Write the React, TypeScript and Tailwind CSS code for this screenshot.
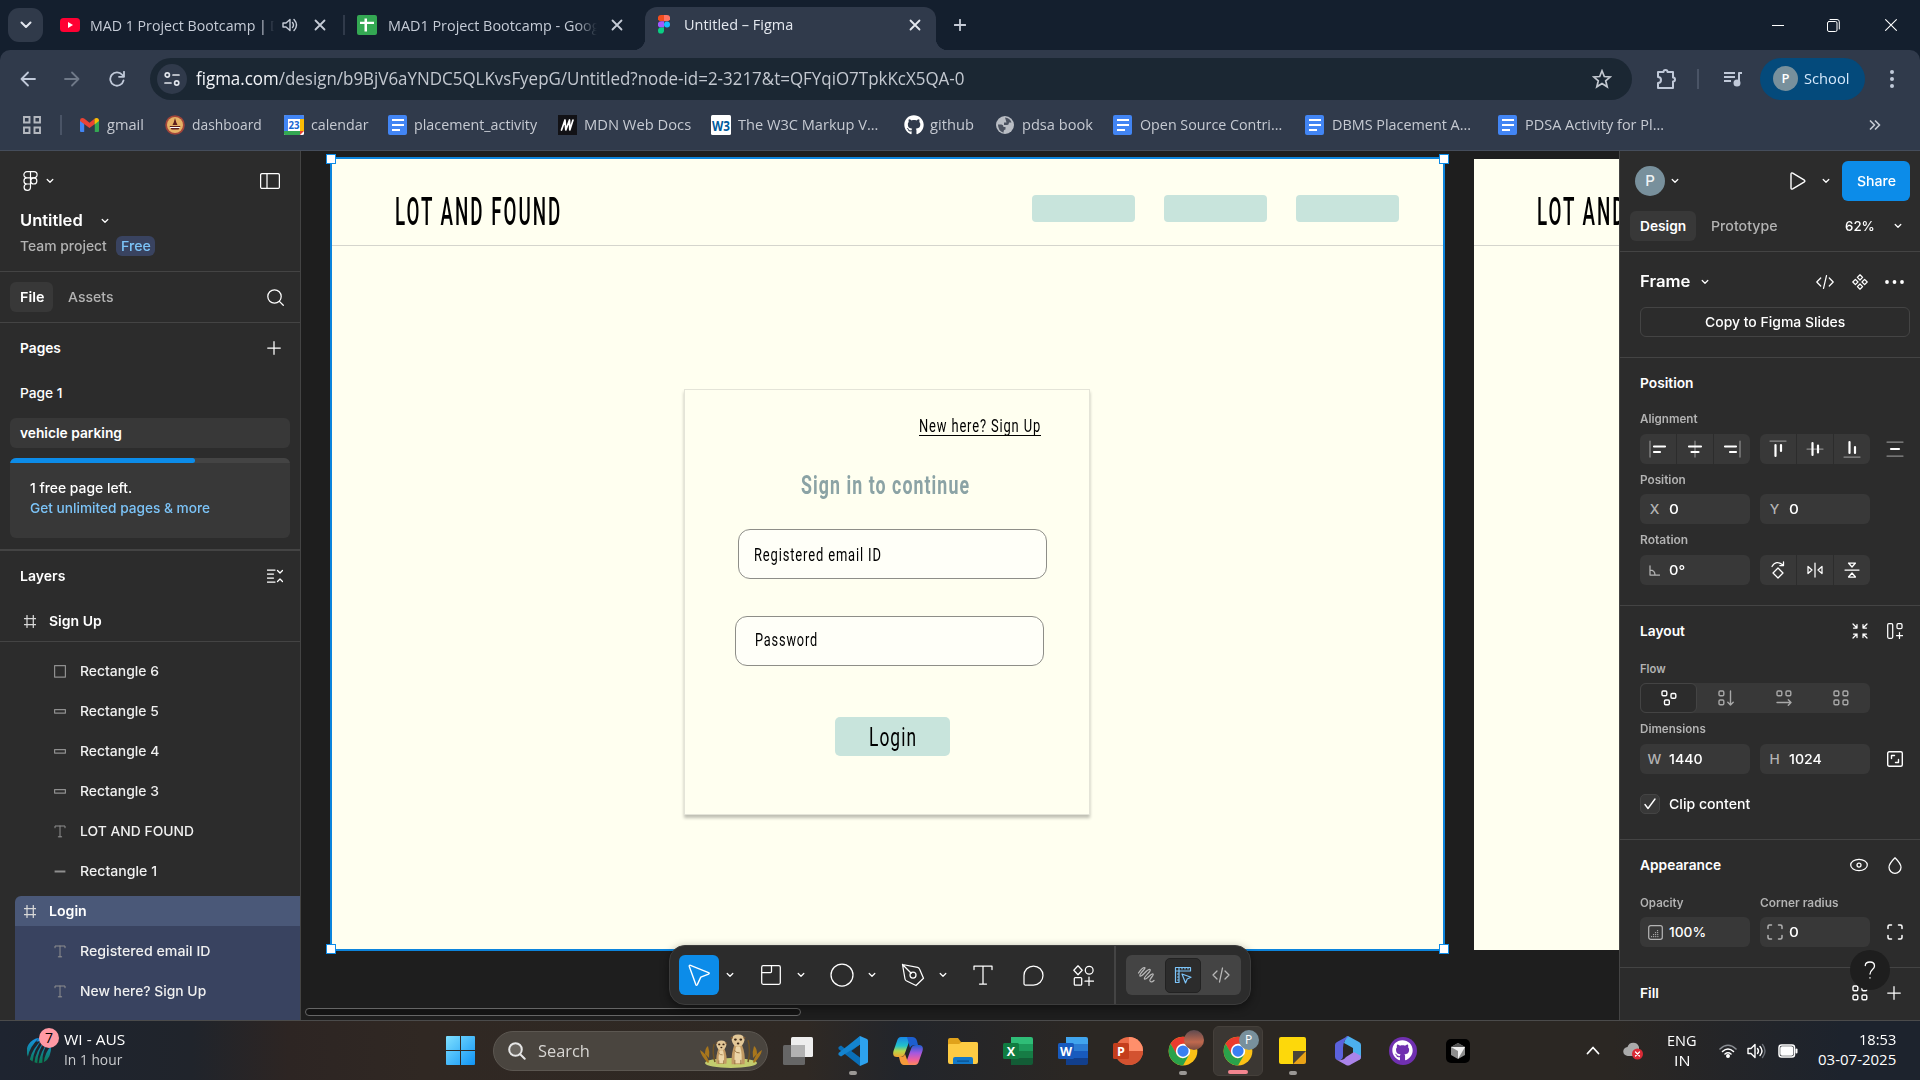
import React, { useLayoutEffect, useRef, useState } from "react";
import { FaGithub } from "react-icons/fa";

type Kids = { children?: React.ReactNode };

/* Text that is condensed or stretched horizontally to fill a fixed measure. */
function Fit({ w, className = "", children }: { w: number; className?: string } & Kids) {
  const ref = useRef<HTMLSpanElement>(null);
  const [scale, setScale] = useState(1);
  useLayoutEffect(() => {
    if (ref.current && ref.current.offsetWidth) setScale(w / ref.current.offsetWidth);
  }, [w]);
  return (
    <span className={"block shrink-0 " + className} style={{ width: w }}>
      <span
        ref={ref}
        className="inline-block origin-left whitespace-nowrap align-top"
        style={{ transform: `scaleX(${scale})` }}
      >
        {children}
      </span>
    </span>
  );
}

function Svg({
  w,
  h = w,
  vb,
  className = "",
  sw = 1.25,
  children,
}: { w: number; h?: number; vb?: string; className?: string; sw?: number } & Kids) {
  return (
    <svg
      width={w}
      height={h}
      viewBox={vb ?? `0 0 ${w} ${h}`}
      fill="none"
      stroke="currentColor"
      strokeWidth={sw}
      strokeLinecap="round"
      strokeLinejoin="round"
      className={"block shrink-0 " + className}
    >
      {children}
    </svg>
  );
}

const Chevron = ({ className = "" }: { className?: string }) => (
  <Svg w={8} h={6} className={className}>
    <path d="M1.2 1.5 4 4.3 6.8 1.5" />
  </Svg>
);

const Close = ({ className = "" }: { className?: string }) => (
  <Svg w={12} sw={1.8} className={className}>
    <path d="m1.5 1.5 9 9m0-9-9 9" />
  </Svg>
);

const Plus = ({ className = "" }: { className?: string }) => (
  <Svg w={14} className={className}>
    <path d="M7 .7v12.6M.7 7h12.6" />
  </Svg>
);

const DocIcon = ({ className = "" }: { className?: string }) => (
  <Svg w={19} h={20} className={className} sw={0}>
    <rect width="19" height="20" rx="2" fill="#4285f4" />
    <path d="M4 4h12v2H4zM4 9h12v2H4zM4 14h8v2H4z" fill="#fff" />
  </Svg>
);

/* ---------- Browser ---------- */

function TabStrip() {
  return (
    <div className="flex h-[50px] items-center bg-[#141f2e] pl-2 text-[15px] text-[#c5cbd6]">
      <div className="flex h-[34px] w-[35px] items-center justify-center rounded-[11px] bg-[#303a4a] text-[#e2e6ee]">
        <Svg w={12} h={8} sw={2}>
          <path d="m1.5 1.5 4.5 4.5 4.5-4.5" />
        </Svg>
      </div>
      <Svg w={20} h={14} sw={0} className="ml-[17px]">
        <rect width="20" height="14" rx="3.5" fill="#ff0033" />
        <path d="M8 4v6l5-3z" fill="#fff" />
      </Svg>
      <div className="ml-[10px] flex w-[184px] shrink-0 overflow-hidden whitespace-nowrap [mask-image:linear-gradient(to_right,#000_94%,transparent)]">
        <Fit w={177}>MAD 1 Project Bootcamp |</Fit>
        <span className="ml-[3px]">D</span>
      </div>
      <Svg w={16} h={14} sw={1.4} className="ml-2">
        <path d="M1 5v4h3l4 3.5v-11L4 5zM10.500 4.500q2 2.500 0 5M12 1.500q5 5.500 0 11" />
      </Svg>
      <Close className="ml-4" />
      <div className="ml-[17px] h-5 w-[2px] bg-[#303a4a]" />
      <Svg w={20} sw={0} className="ml-3">
        <rect width="20" height="20" rx="2" fill="#34a853" />
        <path d="M7.500 3.500h2.500v13H7.500zM3 6.700h14v2.300H3z" fill="#fff" />
      </Svg>
      <div className="ml-[11px] w-[209px] shrink-0 overflow-hidden whitespace-nowrap [mask-image:linear-gradient(to_right,#000_90%,transparent)]">
        <Fit w={212}>MAD1 Project Bootcamp - Goog</Fit>
      </div>
      <Close className="ml-[14px]" />
      <div className="relative ml-[22px] flex h-[43px] w-[291px] shrink-0 items-center self-end rounded-t-xl bg-[#303a4b] pl-[14px] pb-[8px] text-[#e4e8ef]">
        <div className="absolute bottom-0 -left-3 size-3 bg-[radial-gradient(circle_at_0_0,transparent_12px,#303a4b_12.5px)]" />
        <div className="absolute bottom-0 -right-3 size-3 bg-[radial-gradient(circle_at_100%_0,transparent_12px,#303a4b_12.5px)]" />
        <Svg w={12} h={19} sw={0} className="-ml-px">
          <path d="M3 0h3v6.300H3A3 3 0 0 1 3 0z" fill="#f24e1e" />
          <path d="M6 0h3a3.100 3.100 0 0 1 0 6.300H6z" fill="#ff7262" />
          <path d="M3 6.300h3v6.300H3a3.100 3.100 0 0 1 0-6.300z" fill="#a259ff" />
          <circle cx="9" cy="9.500" r="3" fill="#1abcfe" />
          <path d="M3 12.600h3v3.200a3 3 0 1 1-3-3.200z" fill="#0acf83" />
        </Svg>
        <Fit w={109} className="ml-[14px]">Untitled – Figma</Fit>
        <Close className="ml-[116px]" />
      </div>
      <Svg w={12} sw={1.8} className="ml-[18px]">
        <path d="M6 .7v10.600M.7 6h10.600" />
      </Svg>
      <div className="ml-auto mr-[23px] flex items-center text-white">
        <div className="h-px w-3 bg-white" />
        <Svg w={13} h={13} sw={1} className="ml-[43px]">
          <rect x=".5" y="2.500" width="9.500" height="10" rx="1.500" />
          <path d="M3 .5h7a2.300 2.300 0 0 1 2.300 2.300V10" />
        </Svg>
        <Svg w={12} sw={1.1} className="ml-[45px]">
          <path d="m.6.600 10.800 10.800m0-10.800L.6 11.400" />
        </Svg>
      </div>
    </div>
  );
}

function AddressRow() {
  return (
    <div className="flex h-[57px] items-center pl-5 text-[#c0c9d9]">
      <Svg w={16} sw={1.8}>
        <path d="M15 8H1.500M8 1.500 1.500 8 8 14.500" />
      </Svg>
      <Svg w={16} sw={1.8} className="ml-7 text-[#6f7988]">
        <path d="M1 8h13.500M8 1.500 14.500 8 8 14.500" />
      </Svg>
      <Svg w={16} sw={1.8} className="ml-[29px]">
        <path d="M14.500 9.500a6.700 6.700 0 1 1-1.300-5.700L15 5.500M15 .8v5h-5" />
      </Svg>
      <div className="ml-[25px] flex h-[42px] w-[1482px] shrink-0 items-center rounded-full bg-[#1b2733] pl-[7px] text-[17.5px] text-[#c3c8d0]">
        <div className="flex size-[30px] items-center justify-center rounded-full bg-[#303a4b] text-[#e1e5ec]">
          <Svg w={16} h={14} sw={1.7}>
            <circle cx="3.300" cy="3" r="2.100" />
            <path d="M9 3h6M1 11h6" />
            <circle cx="12.700" cy="11" r="2.100" />
          </Svg>
        </div>
        <Fit w={768} className="ml-[9px]">
          <span className="text-[#f2f4f8]">figma.com</span>/design/b9BjV6aYNDC5QLKvsFyepG/Untitled?node-id=2-3217&amp;t=QFYqiO7TpkKcX5QA-0
        </Fit>
        <Svg w={20} sw={1.7} className="ml-[628px]">
          <path d="m10 1.800 2.300 5.700 6 .4-4.600 3.900 1.500 6L10 14.500l-5.200 3.300 1.500-6-4.600-3.900 6-.4z" strokeLinejoin="miter" />
        </Svg>
      </div>
      <Svg w={21} h={22} sw={2} className="ml-6">
        <path d="M2 4h5.500a2 2 0 1 1 4 0H17v5.500a2 2 0 1 1 0 4V20H2v-5a2.800 2.800 0 0 0 0-6z" />
      </Svg>
      <div className="ml-5 h-5 w-[2px] bg-[#4a5466]" />
      <Svg w={20} h={16} sw={2} className="ml-6">
        <path d="M1 2h11M1 6h11M1 10h7M16 12V2h3" strokeLinecap="butt" />
        <circle cx="14" cy="12" r="2.500" fill="currentColor" />
      </Svg>
      <div className="ml-[17px] flex h-[42px] w-[105px] items-center rounded-full bg-[#044a7b] pl-[13px] text-[#d4e8fb]">
        <div className="flex size-[25px] items-center justify-center rounded-full bg-[#78909c] text-[13px] font-semibold text-white">P</div>
        <Fit w={45} className="ml-[6px] text-[15px]">School</Fit>
      </div>
      <Svg w={4} h={18} sw={0} className="ml-[25px]">
        <g fill="currentColor">
          <circle cx="2" cy="2" r="2" />
          <circle cx="2" cy="9" r="2" />
          <circle cx="2" cy="16" r="2" />
        </g>
      </Svg>
    </div>
  );
}

function Bookmarks() {
  return (
    <div className="flex h-[35px] items-center pl-[23px] text-[15px] text-[#c6cad2]">
      <Svg w={18} sw={1.9} className="text-[#b4b8bf]">
        <path d="M1 1h5.500v5.500H1zM11.500 1H17v5.500h-5.500zM1 11.500h5.500V17H1zM11.500 11.500H17V17h-5.500z" strokeLinejoin="miter" />
      </Svg>
      <div className="ml-[19px] h-5 w-[2px] bg-[#4a5466]" />
      <Svg w={19} h={14} sw={0} className="ml-[18px]">
        <path d="M0 2.500V13q0 1 1 1h3.200V5.500z" fill="#4285f4" />
        <path d="M19 2.500V13q0 1-1 1h-3.200V5.500z" fill="#34a853" />
        <path d="M0 3Q-.2 0 2.500 0q1 0 2 .8l5 3.900 5-3.900v5.400l-5 3.900L0 3z" fill="#ea4335" />
        <path d="M14.500.8Q15.500 0 16.500 0 19 0 19 3l-4.500 3.400z" fill="#fbbc04" />
      </Svg>
      <Fit w={37} className="ml-2">gmail</Fit>
      <Svg w={20} sw={0} className="ml-[21px]">
        <circle cx="10" cy="10" r="9.800" fill="#a3453a" />
        <circle cx="10" cy="10" r="8" fill="#e6b266" />
        <path d="M4.500 11h11l-2 3.500h-7zM10 3l1.300 4.500L12.500 10h-5l1.200-2.500z" fill="#5d1f1f" />
        <path d="M5.500 12.500h9" stroke="#fff" strokeWidth="1" />
      </Svg>
      <Fit w={70} className="ml-[7px]">dashboard</Fit>
      <Svg w={20} sw={0} className="ml-[22px]">
        <rect width="20" height="20" rx="1.500" fill="#fff" />
        <path d="M0 1.500Q0 0 1.500 0h17Q20 0 20 1.500V4H4v12H0z" fill="#4285f4" />
        <path d="M16 4h4v12h-4z" fill="#fbbc04" />
        <path d="M0 16h16v4H1.500Q0 20 0 18.500z" fill="#34a853" />
        <path d="M16 16h4l-4 4z" fill="#ea4335" />
        <text x="10" y="14" fontSize="11" fontWeight="700" textAnchor="middle" fill="#1967d2" fontFamily="Open Sans" textLength="11" lengthAdjust="spacingAndGlyphs">23</text>
      </Svg>
      <Fit w={58} className="ml-[7px]">calendar</Fit>
      <DocIcon className="ml-[19px]" />
      <Fit w={123} className="ml-[7px]">placement_activity</Fit>
      <Svg w={19} h={20} sw={1.7} className="ml-[21px] text-white">
        <path d="M0 0h19v20H0z" fill="#121216" stroke="none" />
        <path d="M3.500 15 7 5l.8 10L11.500 5l.3 10L15 5" />
      </Svg>
      <Fit w={107} className="ml-[7px]">MDN Web Docs</Fit>
      <Svg w={20} sw={0} className="ml-5">
        <rect width="20" height="20" rx="1.500" fill="#fff" />
        <text x="1" y="15.500" fontSize="14" fontWeight="700" fill="#005a9c" fontFamily="Open Sans" textLength="18" lengthAdjust="spacingAndGlyphs">W3</text>
      </Svg>
      <Fit w={140} className="ml-[7px]">The W3C Markup V...</Fit>
      <FaGithub className="ml-[26px] block size-5 shrink-0 text-white" />
      <Fit w={44} className="ml-[6px]">github</Fit>
      <Svg w={18} sw={0} className="ml-[22px]">
        <circle cx="9" cy="9" r="9" fill="#b9bdc4" />
        <path d="M2 8.500h3.500q2 .3 2 2.500h2v2.500q-2 0-2 3.300Q2 15 2 8.500zM9 1.500q5 .5 6.500 5h-2.500q0 2.500-2 2.500H8V6.500h2.500z" fill="#4b5260" />
      </Svg>
      <Fit w={71} className="ml-2">pdsa book</Fit>
      <DocIcon className="ml-5" />
      <Fit w={142} className="ml-2">Open Source Contri...</Fit>
      <DocIcon className="ml-[23px]" />
      <Fit w={139} className="ml-2">DBMS Placement A...</Fit>
      <DocIcon className="ml-[27px]" />
      <Fit w={139} className="ml-2">PDSA Activity for Pl...</Fit>
      <Svg w={12} h={10} sw={1.7} className="ml-auto mr-[39px]">
        <path d="m1.500 1 4 4-4 4m5-8 4 4-4 4" />
      </Svg>
    </div>
  );
}

/* ---------- Left panel ---------- */

const HashIcon = () => (
  <Svg w={12} h={13} className="text-[#d8d8d8]">
    <path d="M3 .5v12M9.300.5v12M.3 3.500h11.700M.3 9.500h11.700" />
  </Svg>
);

type Kind = "square" | "bar" | "line" | "text";
function LayerIcon({ kind }: { kind: Kind }) {
  return (
    <Svg w={12} h={13} sw={1.2}>
      {kind === "square" && <rect x=".6" y=".6" width="10.800" height="11.500" />}
      {kind === "bar" && <rect x=".6" y="4.600" width="10.800" height="3.500" />}
      {kind === "line" && <path d="M.6 6.500h10.800" strokeWidth="2" strokeLinecap="butt" />}
      {kind === "text" && <path d="M1 2.800V1h10v1.800M6 1v10.800M4.300 11.800h3.400" strokeWidth="1" />}
    </Svg>
  );
}

function Layer({ kind, label, w }: { kind: Kind; label: string; w: number }) {
  return (
    <div className="flex h-10 items-center pl-[54px]">
      <div className="text-[#8f8f8f]">
        <LayerIcon kind={kind} />
      </div>
      <Fit w={w} className="ml-[14px] text-[#f0f0f0]">{label}</Fit>
    </div>
  );
}

function LeftPanel() {
  return (
    <div className="h-full w-[301px] shrink-0 overflow-hidden border-r border-[#444] bg-[#2c2c2c] text-[13.75px] font-[480] leading-5 text-white">
      <div className="h-[121px] border-b border-[#444] pt-[14px]">
        <div className="flex h-8 items-center pl-[23px] pr-5">
          <Svg w={15} h={20} sw={1.2}>
            <path d="M7.500.7H4a3.050 3.050 0 0 0 0 6.200h3.500zM7.500.7H11a3.050 3.050 0 0 1 0 6.200H7.500zM7.500 6.900H4A3.050 3.050 0 0 0 4 13h3.500zM7.500 13v3.200A3.200 3.200 0 1 1 4 13" />
            <circle cx="10.800" cy="9.950" r="3.050" />
          </Svg>
          <Chevron className="ml-2" />
          <Svg w={20} h={16} className="ml-auto">
            <rect x=".6" y=".6" width="18.800" height="14.800" rx="1.500" />
            <path d="M7 1v14" />
          </Svg>
        </div>
        <div className="mt-[11px] flex h-6 items-center pl-[20px]">
          <Fit w={63} className="text-[16px] font-semibold">Untitled</Fit>
          <Chevron className="ml-[18px] mt-[2px]" />
        </div>
        <div className="mt-1 flex h-5 items-center pl-[20px]">
          <Fit w={87} className="text-[#b3b3b3]">Team project</Fit>
          <div className="ml-[9px] flex h-5 w-[39px] items-center justify-center rounded-[6px] bg-[#394360] text-[#7cc4f8]">
            <Fit w={30}>Free</Fit>
          </div>
        </div>
      </div>
      <div className="flex h-[51px] items-center border-b border-[#444] pl-[10px] pr-4">
        <div className="flex h-[30px] w-[43px] items-center rounded-[6px] bg-[#383838] pl-[10px] font-semibold">
          <Fit w={24}>File</Fit>
        </div>
        <Fit w={46} className="ml-[15px] text-[#b3b3b3]">Assets</Fit>
        <Svg w={17} className="ml-auto">
          <circle cx="7.500" cy="7.500" r="6.700" />
          <path d="m12.400 12.400 3.900 3.900" />
        </Svg>
      </div>
      <div className="flex h-[50px] items-center pl-5 pr-[19px]">
        <Fit w={41} className="font-semibold">Pages</Fit>
        <Plus className="ml-auto" />
      </div>
      <div className="mt-[5px] flex h-[30px] items-center pl-5">
        <Fit w={43}>Page 1</Fit>
      </div>
      <div className="mx-[10px] mt-[10px] flex h-[30px] items-center rounded-[6px] bg-[#383838] pl-[10px]">
        <Fit w={102} className="font-semibold">vehicle parking</Fit>
      </div>
      <div className="mx-[10px] mt-[10px] h-20 overflow-hidden rounded-[6px] bg-[#383838]">
        <div className="h-[5px] bg-[#444]">
          <div className="h-full w-[185px] rounded-r-sm bg-[#0c8ce9]" />
        </div>
        <div className="pl-5 pt-[15px]">
          <Fit w={102}>1 free page left.</Fit>
          <Fit w={180} className="text-[#7cc4f8]">Get unlimited pages &amp; more</Fit>
        </div>
      </div>
      <div className="mt-[11px] h-[2px] bg-[#444]" />
      <div className="flex h-[50px] items-center pl-5 pr-[17px]">
        <Fit w={45} className="font-semibold">Layers</Fit>
        <Svg w={16} h={14} className="ml-auto">
          <path d="M.5 1h7.500M.5 5h6M.5 9h6M.5 13h7.500M10.500 1.500 13 4l2.500-2.500M10.500 12.500 13 10l2.500 2.500" />
        </Svg>
      </div>
      <div className="mt-[5px] flex h-[36px] items-center border-b border-[#444] pb-[5px] pl-6 font-semibold">
        <HashIcon />
        <Fit w={53} className="ml-[13px]">Sign Up</Fit>
      </div>
      <div className="mt-[9px]">
        <Layer kind="square" label="Rectangle 6" w={79} />
        <Layer kind="bar" label="Rectangle 5" w={79} />
        <Layer kind="bar" label="Rectangle 4" w={79} />
        <Layer kind="bar" label="Rectangle 3" w={79} />
        <Layer kind="text" label="LOT AND FOUND" w={114} />
        <Layer kind="line" label="Rectangle 1" w={77} />
      </div>
      <div className="ml-[15px] mt-[5px] flex h-[30px] items-center rounded-tl-[6px] bg-[#4a5878] pl-[9px] font-semibold">
        <HashIcon />
        <Fit w={38} className="ml-[13px]">Login</Fit>
      </div>
      <div className="ml-[15px] h-[94px] bg-[#394360] pt-[5px]">
        <div className="-ml-[15px]">
          <Layer kind="text" label="Registered email ID" w={130} />
          <Layer kind="text" label="New here? Sign Up" w={126} />
        </div>
      </div>
    </div>
  );
}

/* ---------- Canvas ---------- */

const Handle = ({ className }: { className: string }) => (
  <div className={"absolute size-[10px] border-[1.500px] border-[#0c8ce9] bg-white " + className} />
);

function Heading() {
  return (
    <div className="flex h-[87px] items-center border-b-[1.500px] border-[#d5d5cd] pl-[63px] pt-[19px]">
      <Fit w={167} className="text-[38px] font-medium leading-[40px] tracking-[4px] text-black">LOT AND FOUND</Fit>
    </div>
  );
}

function Canvas() {
  return (
    <div className="relative h-full min-w-0 flex-1 overflow-hidden bg-[#1e1e1e] font-['Roboto',sans-serif]">
      <div className="absolute left-[29px] top-[6px] h-[794px] w-[1115px] border-2 border-[#0c84dc] bg-[#fffff0]">
        <Heading />
        <div className="absolute left-[700px] top-[36px] flex gap-[29px]">
          <div className="h-[27px] w-[103px] rounded-[4px] bg-[#c8e4dc]" />
          <div className="h-[27px] w-[103px] rounded-[4px] bg-[#c8e4dc]" />
          <div className="h-[27px] w-[103px] rounded-[4px] bg-[#c8e4dc]" />
        </div>
        <div className="absolute left-[352px] top-[230px] h-[426px] w-[406px] border border-[#e4e4d8] bg-[#fffff0] text-black shadow-[0_3px_3px_rgba(0,0,0,0.25)]">
          <div className="flex h-[72px] items-center pl-[234px]">
            <Fit w={122} className="border-b border-black text-[18px] leading-[19px] tracking-[1.2px]">New here? Sign Up</Fit>
          </div>
          <Fit w={169} className="ml-[116px] mt-[8px] text-[25px] font-bold leading-[32px] tracking-[1.5px] text-[#8ba3a5]">Sign in to continue</Fit>
          <div className="ml-[53px] mt-[27px] flex h-[50px] w-[309px] items-center rounded-[12px] border border-[#8e8e88] bg-[#fffff8] pl-[15px]">
            <Fit w={128} className="text-[18px] tracking-[1.2px]">Registered email ID</Fit>
          </div>
          <div className="ml-[50px] mt-[37px] flex h-[50px] w-[309px] items-center rounded-[12px] border border-[#8e8e88] bg-[#fffff8] pl-[19px] pb-[3px]">
            <Fit w={63} className="text-[18px] tracking-[1.2px]">Password</Fit>
          </div>
          <div className="ml-[150px] mt-[51px] flex h-[39px] w-[115px] items-center justify-center rounded-[5px] bg-[#c8e4dc] pt-[3px]">
            <Fit w={48} className="text-[25px] leading-8 tracking-[1.5px]">Login</Fit>
          </div>
        </div>
        <Handle className="-left-[6px] -top-[5px]" />
        <Handle className="-right-[6px] -top-[5px]" />
        <Handle className="-bottom-[5px] -left-[6px]" />
        <Handle className="-bottom-[5px] -right-[6px]" />
      </div>
      <div className="absolute left-[1173px] top-[8px] h-[791px] w-[400px] bg-[#fffff0]">
        <Heading />
      </div>
      <div className="absolute bottom-[4px] left-[4px] h-[8px] w-[496px] rounded-full border border-[#666] bg-[#141414]" />
      <BottomBar />
    </div>
  );
}

function BottomBar() {
  return (
    <div className="absolute left-[368px] top-[794px] flex h-[60px] w-[582px] items-center rounded-[16px] border border-[#3c3c3c] bg-[#2c2c2c] pl-[9px] text-white shadow-[0_3px_10px_rgba(0,0,0,0.45)]">
      <div className="flex size-10 items-center justify-center rounded-[6px] bg-[#0c8ce9]">
        <Svg w={22} sw={1.4}>
          <path d="M1.300 2.500Q.9 1 2.500 1.400l18 7.200q1.500.7 0 1.500l-7.700 3-3.500 7.500q-.8 1.300-1.500 0z" />
        </Svg>
      </div>
      <Chevron className="ml-[7px]" />
      <Svg w={20} className="ml-[27px]">
        <rect x=".7" y=".7" width="18.600" height="18.600" rx="1.500" />
        <path d="M10.500 1v5.500q0 1-1 1H1" />
      </Svg>
      <Chevron className="ml-4" />
      <Svg w={24} className="ml-[25px]">
        <circle cx="12" cy="12" r="11" />
      </Svg>
      <Chevron className="ml-[14px]" />
      <Svg w={24} className="ml-[25px]">
        <path d="M1.500 1.500 4 16q.3 1.500 1.700 2l9.300 4.500 7.500-7.300L18.500 6q-.5-1.300-2-1.600zM1.500 1.500l8.700 8.800" />
        <circle cx="12" cy="12" r="3" />
      </Svg>
      <Chevron className="ml-[14px]" />
      <Svg w={20} h={20} className="ml-[26px]">
        <path d="M1 4.500V1h18v3.500M10 1v18M6.500 19h7" />
      </Svg>
      <Svg w={21} h={21} className="ml-[30px]">
        <path d="M10.500 1a9.500 9.500 0 1 1 0 19H2.200q-1.200 0-1.200-1.200V10.500A9.500 9.500 0 0 1 10.500 1z" />
      </Svg>
      <Svg w={21} h={21} className="ml-[29px]">
        <path d="m5 .8 4.200 4.500L5 9.800.8 5.300zM16 12v8.500M12 16.200h8.500" />
        <circle cx="16.200" cy="5.300" r="3.900" />
        <rect x="1.300" y="12.500" width="7.400" height="7.700" rx="1" />
      </Svg>
      <div className="ml-5 h-full w-[2px] bg-[#444]" />
      <div className="ml-[10px] flex h-10 w-[115px] items-center rounded-[6px] bg-[#444] text-[#b8b8b8]">
        <Svg w={18} className="ml-[11px]">
          <path d="M1.500 7Q5 1.500 7.500 1.500c2.500.5-6 6.500-4.500 8.500 2 1.500 7.500-8 10-6.500 2 1.500-7 7.500-5.500 9.500C9.500 14.500 14 6.500 16 8c1.500 1.500-4 4.500-3 7 1 1.500 2.500 1 4-.5" />
        </Svg>
        <div className="ml-[10px] flex h-[35px] w-[36px] items-center justify-center rounded-[5px] border border-[#222] bg-[#2c2c2c] text-[#7cc4f8]">
          <Svg w={18} sw={1.2}>
            <path d="M16.500 5V1.500h-15v15H5V5zM1.500 5H5V1.500M8 1.500V3M11 1.500V3M14 1.500V3M3.500 8H5M3.500 11H5M3.500 14H5M8 8l9 3.300-3.800 1.700L11.500 17z" />
          </Svg>
        </div>
        <Svg w={18} h={16} className="ml-[11px]">
          <path d="M5 4 1 8l4 4M13 4l4 4-4 4M10.500 1l-3 14" />
        </Svg>
      </div>
    </div>
  );
}

/* ---------- Right panel ---------- */

const Label = ({ children, w, className = "" }: { w: number; className?: string } & Kids) => (
  <Fit w={w} className={"text-[11.250px] font-[560] leading-5 text-[#b3b3b3] " + className}>{children}</Fit>
);

const Cells = ({ icons }: { icons: React.ReactNode[] }) => (
  <div className="grid h-[30px] w-[110px] shrink-0 grid-cols-3 gap-px overflow-hidden rounded-[6px]">
    {icons.map((icon, i) => (
      <div key={i} className="flex items-center justify-center bg-[#383838]">{icon}</div>
    ))}
  </div>
);

const Field = ({ lead, value, w }: { lead: React.ReactNode; value: string; w: number }) => (
  <div className="flex h-[30px] w-[110px] shrink-0 items-center rounded-[6px] bg-[#383838]">
    <div className="flex w-[29px] justify-center text-[#b3b3b3]">{lead}</div>
    <Fit w={w}>{value}</Fit>
  </div>
);

const AlignIcon = ({ dim, lit }: { dim: string; lit: string }) => (
  <Svg w={18} sw={0}>
    <path d={dim} stroke="#8c8c8c" strokeWidth="1.250" />
    <path d={lit} stroke="#fff" strokeWidth="2.200" />
  </Svg>
);

const Corners = () => (
  <Svg w={16} sw={1.5}>
    <path d="M1 4.500V2.500Q1 1 2.500 1h2M11.500 1h2Q15 1 15 2.500v2M15 11.500v2q0 1.500-1.500 1.500h-2M4.500 15h-2Q1 15 1 13.500v-2" />
  </Svg>
);

const FourSquares = () => (
  <Svg w={16} sw={1.4}>
    <rect x="1" y="1" width="4.800" height="4.800" rx="1.200" />
    <rect x="10" y="1" width="4.800" height="4.800" rx="1.200" />
    <rect x="1" y="10" width="4.800" height="4.800" rx="1.200" />
    <rect x="10" y="10" width="4.800" height="4.800" rx="1.200" />
  </Svg>
);

function RightPanel() {
  return (
    <div className="relative h-full w-[301px] shrink-0 overflow-hidden border-l border-[#444] bg-[#2c2c2c] text-[13.750px] font-[480] leading-5 text-white">
      <div className="h-[101px] border-b border-[#444]">
        <div className="flex h-[60px] items-center pl-[15px] pr-[10px]">
          <div className="flex size-[30px] items-center justify-center rounded-full bg-[#78909c] text-[15px] text-[#eef2f4]">P</div>
          <Chevron className="ml-[6px]" />
          <Svg w={16} h={18} className="ml-[111px]" sw={1.4}>
            <path d="M1 2.300Q1 .3 2.700 1.200l11.700 7q1 .8 0 1.600l-11.700 7Q1 17.700 1 15.700z" />
          </Svg>
          <Chevron className="ml-4" />
          <div className="ml-auto flex h-10 w-[68px] items-center justify-center rounded-[6px] bg-[#0c8ce9]">
            <Fit w={39}>Share</Fit>
          </div>
        </div>
        <div className="flex h-[30px] items-center pl-[10px] pr-[18px]">
          <div className="flex h-[30px] w-[66px] items-center rounded-[6px] bg-[#383838] pl-[10px] font-semibold">
            <Fit w={46}>Design</Fit>
          </div>
          <Fit w={66} className="ml-[15px] text-[#b3b3b3]">Prototype</Fit>
          <Fit w={30} className="ml-auto">62%</Fit>
          <Chevron className="ml-[19px]" />
        </div>
      </div>
      <div className="h-[106px] border-b border-[#444] pt-[13px]">
        <div className="flex h-8 items-center pl-[20px] pr-4">
          <Fit w={50} className="text-[16px] font-semibold">Frame</Fit>
          <Chevron className="ml-[11px] mt-[2px]" />
          <Svg w={18} h={14} className="ml-auto mt-[2px]">
            <path d="M4.700 3 .8 7l3.900 4M13.300 3l3.900 4-3.900 4M10.500.6l-3 12.800" />
          </Svg>
          <Svg w={16} className="ml-[18px] mt-[2px]">
            <path d="m8 .8 2.600 2.600L8 6 5.400 3.400zM8 10l2.600 2.600L8 15.200l-2.600-2.600zM3.400 5.400 6 8l-2.600 2.600L.8 8zM12.600 5.400 15.200 8l-2.600 2.600L10 8z" />
          </Svg>
          <Svg w={19} h={4} sw={0} className="ml-[17px] mt-px">
            <g fill="currentColor">
              <circle cx="2" cy="2" r="1.900" />
              <circle cx="9.500" cy="2" r="1.900" />
              <circle cx="17" cy="2" r="1.900" />
            </g>
          </Svg>
        </div>
        <div className="ml-5 mt-[10px] flex h-[30px] w-[270px] items-center justify-center rounded-[6px] border border-[#444]">
          <Fit w={140}>Copy to Figma Slides</Fit>
        </div>
      </div>
      <div className="h-[248px] border-b border-[#444] pl-5 pt-[15px]">
        <Fit w={54} className="font-semibold">Position</Fit>
        <Label w={58} className="mt-4">Alignment</Label>
        <div className="mt-[5px] flex items-center gap-[10px]">
          <Cells
            icons={[
              <AlignIcon key="l" dim="M1 1v16" lit="M5 6.500h11M5 12h6" />,
              <AlignIcon key="c" dim="M9 1v16" lit="M3 6.500h12M5.500 12h7" />,
              <AlignIcon key="r" dim="M17 1v16" lit="M2 6.500h11M7 12h6" />,
            ]}
          />
          <Cells
            icons={[
              <AlignIcon key="t" dim="M1 1h16" lit="M6.500 5v11M12 5v6" />,
              <AlignIcon key="m" dim="M1 9h16" lit="M6.500 3v12M12 5.500v7" />,
              <AlignIcon key="b" dim="M1 17h16" lit="M6.500 2v11M12 7v6" />,
            ]}
          />
          <div className="ml-[6px]">
            <AlignIcon dim="M1 2h16M1 16h16" lit="M5 9h8" />
          </div>
        </div>
        <Label w={46} className="mt-[6px]">Position</Label>
        <div className="mt-[4px] flex gap-[10px]">
          <Field lead="X" value="0" w={10} />
          <Field lead="Y" value="0" w={10} />
        </div>
        <Label w={48} className="mt-[6px]">Rotation</Label>
        <div className="mt-[5px] flex gap-[10px]">
          <Field
            lead={
              <Svg w={11}>
                <path d="M1 .8v9.200h9.500M1 5q5 0 5 5" />
              </Svg>
            }
            value="0°"
            w={16}
          />
          <Cells
            icons={[
              <Svg key="a" w={16} h={18}>
                <path d="m8 7 5 5-5 5-5-5zM2 5.500Q6-1.500 13 4M13.500.8V4.500H9.800" />
              </Svg>,
              <Svg key="b" w={16} h={16}>
                <path d="M8 1v14M1 4.500v7L5 8zM15 4.500v7L11 8z" />
              </Svg>,
              <Svg key="c" w={16} h={16}>
                <path d="M1 8h14M4.500 1h7L8 5zM4.500 15h7L8 11z" />
              </Svg>,
            ]}
          />
        </div>
      </div>
      <div className="h-[234px] border-b border-[#444] pl-5 pt-[15px]">
        <div className="flex h-5 items-center pr-[17px]">
          <Fit w={45} className="font-semibold">Layout</Fit>
          <Svg w={16} className="ml-auto">
            <path d="m1 1 4 4M5 1.500V5H1.500M15 1l-4 4M11 1.500V5h3.500M1 15l4-4M5 14.500V11H1.500M15 15l-4-4M11 14.500V11h3.500" />
          </Svg>
          <Svg w={16} className="ml-[19px]">
            <rect x=".7" y=".7" width="5" height="14.600" rx="1.200" />
            <rect x="10" y=".7" width="5" height="5" rx="1.200" />
            <path d="M12.500 9.500v6M9.500 12.500h6" />
          </Svg>
        </div>
        <Label w={26} className="mt-[18px]">Flow</Label>
        <div className="mt-[4px] flex h-[30px] w-[230px] items-center rounded-[6px] bg-[#383838] text-[#a8a8a8]">
          <div className="flex h-full w-[57px] items-center justify-center rounded-[6px] border border-[#444] bg-[#2c2c2c] text-white">
            <Svg w={16} sw={1.4}>
              <rect x="1" y="1" width="4.800" height="4.800" rx="1.200" />
              <rect x="10" y="3.500" width="4.800" height="4.800" rx="1.200" />
              <rect x="3.500" y="10" width="4.800" height="4.800" rx="1.200" />
            </Svg>
          </div>
          <div className="flex flex-1 justify-center">
            <Svg w={16} sw={1.4}>
              <rect x="1" y="1" width="4.800" height="4.800" rx="1.200" />
              <rect x="1" y="10" width="4.800" height="4.800" rx="1.200" />
              <path d="M12.500 1v14M9.800 12.300l2.700 2.700 2.700-2.700" />
            </Svg>
          </div>
          <div className="flex flex-1 justify-center">
            <Svg w={16} sw={1.4}>
              <rect x="1" y="1" width="4.800" height="4.800" rx="1.200" />
              <rect x="10" y="1" width="4.800" height="4.800" rx="1.200" />
              <path d="M1 12.500h14M12.300 9.800l2.700 2.700-2.700 2.700" />
            </Svg>
          </div>
          <div className="flex flex-1 justify-center">
            <FourSquares />
          </div>
        </div>
        <Label w={66} className="mt-[6px]">Dimensions</Label>
        <div className="mt-[5px] flex items-center gap-[10px]">
          <Field lead="W" value="1440" w={34} />
          <Field lead="H" value="1024" w={33} />
          <Svg w={16} className="ml-[7px]" sw={1.4}>
            <rect x=".7" y=".7" width="14.600" height="14.600" rx="1.500" />
            <path d="M4.500 7.500v-3h3M8.500 11.500h3v-3" />
          </Svg>
        </div>
        <div className="mt-5 flex h-5 items-center">
          <div className="flex size-5 items-center justify-center rounded-[5px] border border-[#444] bg-[#383838]">
            <Svg w={12} h={12} sw={1.4}>
              <path d="m1 6.500 3 4L11 1" />
            </Svg>
          </div>
          <Fit w={81} className="ml-[9px]">Clip content</Fit>
        </div>
      </div>
      <div className="h-[128px] border-b border-[#444] pl-5 pt-[15px]">
        <div className="flex h-5 items-center pr-[18px]">
          <Fit w={81} className="font-semibold">Appearance</Fit>
          <Svg w={18} h={14} className="ml-auto">
            <ellipse cx="9" cy="7" rx="8.300" ry="5.700" />
            <circle cx="9" cy="7" r="2" />
          </Svg>
          <Svg w={14} h={17} className="ml-5">
            <path d="M7 .8q6 6 6 9.500a6 6 0 0 1-12 0Q1 6.800 7 .8z" />
          </Svg>
        </div>
        <div className="mt-[18px] flex">
          <Label w={44}>Opacity</Label>
          <Label w={78} className="ml-[76px]">Corner radius</Label>
        </div>
        <div className="mt-[4px] flex items-center gap-[10px]">
          <Field
            lead={
              <Svg w={15} className="ml-[2px]">
                <rect x=".7" y=".7" width="13.600" height="13.600" rx="2" />
                <path d="M3.500 11.500h8M5.500 9.500h6M7.500 7.500h4M9.500 5.500h2" strokeDasharray=".1 2" />
              </Svg>
            }
            value="100%"
            w={37}
          />
          <Field lead={<Corners />} value="0" w={10} />
          <div className="ml-[7px]">
            <Corners />
          </div>
        </div>
      </div>
      <div className="flex h-[50px] items-center pl-5 pr-[19px]">
        <Fit w={19} className="font-semibold">Fill</Fit>
        <div className="ml-auto">
          <FourSquares />
        </div>
        <Plus className="ml-[19px]" />
      </div>
      <div className="absolute left-[230px] top-[799px] flex size-10 items-center justify-center rounded-full bg-[#1e1e1e]">
        <Svg w={12} h={18} sw={1.3}>
          <path d="M1.300 4.500Q1.500 1 6 1q4.500 0 4.500 4c0 3.500-4.500 3.500-4.500 8M6 16.700v.3" />
        </Svg>
      </div>
    </div>
  );
}

/* ---------- Taskbar ---------- */

const ChromeLogo = () => (
  <svg width="30" height="30" viewBox="0 0 48 48" className="block">
    <circle cx="24" cy="24" r="23" fill="#fbc116" />
    <path d="M24 24 13.500 30 4.100 12.500a23 23 0 0 1 39.800 0H24z" fill="#ea3b2e" />
    <path d="M4.100 12.500 14 29.700A11.500 11.500 0 0 0 24 35.500L34 29.500 24 47A23 23 0 0 1 4.100 12.500z" fill="#2aa24b" />
    <circle cx="24" cy="24" r="11.500" fill="#fff" />
    <circle cx="24" cy="24" r="9" fill="#3a7ff2" />
  </svg>
);

const Office = ({ letter, colors }: { letter: string; colors: string[] }) => (
  <Svg w={30} h={28} sw={0}>
    <path d="M8 0h20q2 0 2 2v5H8z" fill={colors[0]} />
    <path d="M8 7h22v7H8z" fill={colors[1]} />
    <path d="M8 14h22v7H8z" fill={colors[2]} />
    <path d="M8 21h22v5q0 2-2 2H8z" fill={colors[3]} />
    <rect y="6" width="16" height="16" rx="1.500" fill={colors[4]} />
    <text x="8" y="18.500" fontSize="12.500" fontWeight="700" fill="#fff" textAnchor="middle" fontFamily="Open Sans">{letter}</text>
  </Svg>
);

const Slot = ({ children, mark, active }: { mark?: string; active?: boolean } & Kids) => (
  <div className="flex w-[55px] shrink-0 justify-center">
    <div
      className={
        "relative flex h-[50px] w-[50px] items-center justify-center rounded-[6px] " +
        (active ? "border border-[#45403b] bg-[#3b3733]" : "")
      }
    >
      {children}
      {mark && <div className={"absolute bottom-[1px] h-[4px] rounded-full " + mark} />}
    </div>
  </div>
);

/* A standing meerkat, 15 x 28 units. */
function Meerkat({ x, y, s }: { x: number; y: number; s: number }) {
  return (
    <g transform={`translate(${x} ${y}) scale(${s})`}>
      <path d="M4 10q-3 8-2.500 18h12Q14.500 18 11 10z" fill="#c29a63" />
      <path d="M5.500 12q-2 8-1 15h6q1-8-1-15z" fill="#ecd6a8" />
      <path d="M1.500 5.500Q2 .5 7.500.5t6 5Q12 12 7.500 12t-6-6.500z" fill="#e2c797" />
      <ellipse cx="5" cy="5.200" rx="1.300" ry="1" fill="#3a2616" />
      <ellipse cx="10" cy="5.200" rx="1.300" ry="1" fill="#3a2616" />
      <ellipse cx="7.500" cy="8.800" rx="1.200" ry=".9" fill="#3a2616" />
      <circle cx="1.700" cy="3.500" r="1" fill="#7d5832" />
      <circle cx="13.300" cy="3.500" r="1" fill="#7d5832" />
      <path d="M4 15q2 3 5 2.500M4.500 28v-4M10 28v-4" stroke="#8f6a3a" strokeWidth=".8" fill="none" />
    </g>
  );
}

function Taskbar() {
  return (
    <div className="flex h-[60px] items-center border-t border-[#4b4b4b] bg-[linear-gradient(90deg,#1e2430_0%,#20242b_10%,#2d2523_15%,#302823_22%,#2f2924_42%,#22252b_47%,#2b2723_56%,#2b2723_84%,#1d232d_96%,#1d232d_100%)] text-[15px] leading-[20px] text-white">
      <div className="relative ml-[27px] size-[32px]">
        <svg width="28" height="32" viewBox="0 0 30 32" className="absolute left-0 top-[2px]">
          <defs>
            <linearGradient id="ball" x1="0" y1="0" x2="0" y2="1">
              <stop offset="0" stopColor="#1593e8" />
              <stop offset="1" stopColor="#0b7a4b" />
            </linearGradient>
          </defs>
          <path d="M13 0A14 14 0 0 0 1 20Q3 9 13 0zM17 1Q5 12 3 23l3 2Q7 12 17 1zM20 2Q9 14 8 26l3 1Q11 14 20 2zM23 4Q14 15 12.500 27l4-.5Q16 14 23 4zM26 8q-7 8-8 18 8-4 8-18z" fill="url(#ball)" />
          <path d="M13 0q6-1 12 5l-3 3Q16 2 10 4z" fill="#1593e8" />
        </svg>
        <div className="absolute -top-[7px] left-[12px] flex size-5 items-center justify-center rounded-full bg-[#ff99a4] text-[14px] text-black">7</div>
      </div>
      <div className="mb-[3px] ml-[5px] w-[71px]">
        <Fit w={61}>WI - AUS</Fit>
        <Fit w={58} className="text-[#c9cbce]">In 1 hour</Fit>
      </div>
      <svg width="29" height="29" viewBox="0 0 29 29" className="ml-[311px] block shrink-0">
        <defs>
          <linearGradient id="win" x1="0" y1="0" x2="1" y2="1">
            <stop offset="0" stopColor="#7fe0ff" />
            <stop offset="1" stopColor="#1094f5" />
          </linearGradient>
        </defs>
        <path d="M1 0h13v14H0V1q0-1 1-1zM15 0h13q1 0 1 1v13H15zM0 15h14v14H1q-1 0-1-1zM15 15h14v13q0 1-1 1H15z" fill="url(#win)" />
      </svg>
      <div className="ml-[18px] flex h-10 w-[275px] shrink-0 items-center rounded-full border border-[#5c5751] bg-[#4a453f] pl-[14px]">
        <Svg w={18} sw={2} className="text-[#e6e6e6]">
          <circle cx="7.500" cy="7.500" r="6.300" fill="#69655f" />
          <path d="m12.200 12.200 4.500 4.500" />
        </Svg>
        <Fit w={52} className="ml-[12px] text-[17px] text-[#d8d6d3]">Search</Fit>
        <svg width="62" height="34" viewBox="0 0 62 34" className="ml-[110px] block shrink-0">
          <ellipse cx="31" cy="29" rx="26" ry="5" fill="#c3cc6e" />
          <path d="M8 29Q1 22 0 16q6 3 9 12M5 20q0-6 3-8 2 6 1 12M54 29q7-7 8-13-6 3-9 12M57 20q0-6-3-8-2 6-1 12" fill="#a8761c" />
          <path d="M14 10q-2 9 1 18M48 6q3 10 0 22" stroke="#6e5224" strokeWidth="1.500" fill="none" />
          <Meerkat x={15} y={6} s={0.85} />
          <Meerkat x={30} y={0} s={1.08} />
        </svg>
      </div>
      <div className="ml-[2px] flex">
        <Slot>
          <Svg w={30} h={28} sw={0}>
            <rect x="8" width="22" height="20" rx="1.500" fill="#eee" />
            <rect y="8" width="22" height="20" rx="1.500" fill="#666" />
            <path d="M8 8h14v12H8z" fill="#b2b2b2" />
          </Svg>
        </Slot>
        <Slot mark="w-2 bg-[#9b9895]">
          <Svg w={30} h={30} sw={0}>
            <path d="M22 0 7.500 13 3 9.500.5 11v2L22 30z" fill="#0a6fb8" />
            <path d="M22 8.500 13.300 15l8.700 6.500z" fill="#26272a" />
            <path d="M22 0v8.500L3 20.500.5 19v-2z" fill="#1484d0" />
            <path d="m22 0 7 3q1 .5 1 1.500v21q0 1-1 1.500l-7 3z" fill="#2da2ee" />
          </Svg>
        </Slot>
        <Slot>
          <svg width="30" height="28" viewBox="0 0 30 28">
            <defs>
              <linearGradient id="cpl" x1="0" y1="0" x2="0" y2="1">
                <stop offset="0" stopColor="#1787e8" />
                <stop offset=".45" stopColor="#24c2c9" />
                <stop offset=".7" stopColor="#b6d84a" />
                <stop offset="1" stopColor="#f5a331" />
              </linearGradient>
              <linearGradient id="cpr" x1="0" y1="0" x2="0" y2="1">
                <stop offset="0" stopColor="#1c5fd0" />
                <stop offset=".4" stopColor="#a458e0" />
                <stop offset=".75" stopColor="#f0609a" />
                <stop offset="1" stopColor="#fa8b5a" />
              </linearGradient>
            </defs>
            <path d="M8 0h12q-3 1-4 5l-4 11q-1 4-5 4H4q-5 0-3.500-6L4 4q1-4 4-4z" fill="url(#cpl)" />
            <path d="M22 28H10q3-1 4-5l4-11q1-4 5-4h3q5 0 3.500 6L26 24q-1 4-4 4z" fill="url(#cpr)" />
            <path d="M14 0h5q4 0 5 4l1 4h-3q-4 0-5 3z" fill="#1c5fd0" />
            <path d="M16 28h-5q-3 0-4-4l-1-4h2q3 0 4-3z" fill="#f59a3a" />
          </svg>
        </Slot>
        <Slot>
          <Svg w={30} h={28} sw={0}>
            <path d="M0 3q0-2 2-2h8l3 4h15q2 0 2 2v8H0z" fill="#e0a21b" />
            <path d="M0 8q0-1 1-1h10l3-2h14q2 0 2 2v18q0 2-2 2H2q-2 0-2-2z" fill="#fdcb43" />
            <path d="M5 27v-5q0-2 2-2h16q2 0 2 2v5z" fill="#1278c8" />
            <path d="M9 23.500h12v1.200H9z" fill="#0b4f8c" />
          </Svg>
        </Slot>
        <Slot>
          <Office letter="X" colors={["#2fbd77", "#1d9a5b", "#167c45", "#135c36", "#107c41"]} />
        </Slot>
        <Slot>
          <Office letter="W" colors={["#41a5ee", "#2b7cd3", "#185abd", "#123f8c", "#185abd"]} />
        </Slot>
        <Slot>
          <Svg w={30} h={28} sw={0}>
            <circle cx="16" cy="14" r="14" fill="#ed6c47" />
            <path d="M16 0a14 14 0 0 1 14 14H16z" fill="#ff8f6b" />
            <path d="M30 14a14 14 0 0 1-28 0z" fill="#d35230" />
            <rect y="6" width="16" height="16" rx="1.500" fill="#c43e1c" />
            <text x="8" y="18.500" fontSize="12.500" fontWeight="700" fill="#fff" textAnchor="middle" fontFamily="Open Sans">P</text>
          </Svg>
        </Slot>
        <Slot mark="w-2 bg-[#9b9895]">
          <ChromeLogo />
          <div className="absolute left-[26px] top-[4px] size-5 rounded-full bg-[linear-gradient(#5d4a50,#c0694e_60%,#7a4b40)]" />
        </Slot>
        <Slot active mark="w-5 bg-[#f2858f]">
          <ChromeLogo />
          <div className="absolute left-[25px] top-[3px] flex size-5 items-center justify-center rounded-full bg-[#78909c] text-[12px] text-white">P</div>
        </Slot>
        <Slot mark="w-2 bg-[#9b9895]">
          <Svg w={27} h={27} sw={0}>
            <path d="M0 2q0-2 2-2h23q2 0 2 2v12H14v13H2q-2 0-2-2z" fill="#fdd80b" />
            <path d="M14 14h13L14 27z" fill="#4a4438" />
            <path d="M27 14v11q0 2-2 2H14z" fill="#e9a317" />
          </Svg>
        </Slot>
        <Slot>
          <svg width="28" height="30" viewBox="0 0 28 30">
            <path d="m14 0 11 6q2 1 2 3v12q0 2-2 3l-6-3v-9l-9-5 2-6q1-1 2-1z" fill="#4cb0ee" />
            <path d="M9 20v-8q0-8 6-12h-1L3 6Q1 7 1 9v12q0 2 2 3 6 1 6-4z" fill="#5b62dc" />
            <path d="M3 24q6 1 9-3l8-5 7 4q0 3-2 4l-9 5q-2 1-4 0z" fill="#ab84ea" />
          </svg>
        </Slot>
        <Slot>
          <div className="flex size-7 items-center justify-center rounded-full bg-[#7030b0]">
            <FaGithub className="size-[21px] text-white" />
          </div>
        </Slot>
        <Slot>
          <div className="flex size-[24px] items-center justify-center rounded-[5px] bg-black">
            <Svg w={14} h={16} sw={0}>
              <path d="m7 0 7 4v8l-7 4-7-4V4z" fill="#8d8d8d" />
              <path d="M0 4h14L7 16V8z" fill="#f0f0f0" />
              <path d="m7 0 7 4H0z" fill="#555" />
            </Svg>
          </div>
        </Slot>
      </div>
      <div className="ml-auto mr-6 flex items-center">
        <Svg w={14} h={9} sw={1.800}>
          <path d="m1.500 7.500 5.500-6 5.500 6" />
        </Svg>
        <Svg w={20} h={18} sw={0} className="ml-[23px]">
          <path d="M5 14a4.500 4.500 0 0 1-.5-9A6 6 0 0 1 16 5v9z" fill="#aaa" />
          <circle cx="14.500" cy="12" r="5.500" fill="#d92a35" />
          <path d="m12.500 10 4 4m0-4-4 4" stroke="#fff" strokeWidth="1.300" />
        </Svg>
        <div className="mb-[2px] ml-6 w-[29px]">
          <Fit w={30}>ENG</Fit>
          <Fit w={16} className="ml-[7px]">IN</Fit>
        </div>
        <Svg w={18} h={15} sw={1.600} className="mb-px ml-[23px]">
          <path d="M1 6q8-7.500 16 0" stroke="#8a8d92" />
          <path d="M3.500 8.500q5.500-5 11 0M6 11q3-2.500 6 0" />
          <circle cx="9" cy="13" r="1.200" fill="currentColor" />
        </Svg>
        <Svg w={20} h={16} sw={1.400} className="ml-[10px]">
          <path d="M1 5.500v5h3l4 4v-13l-4 4zM10.500 5.500q2 2.500 0 5M13 3.500q4 4.500 0 9" />
          <path d="M15.500 1.500q5 6.500 0 13" stroke="#6b6f76" />
        </Svg>
        <Svg w={20} h={14} sw={1.500} className="ml-[11px]">
          <rect x="1" y="1" width="15.500" height="12" rx="2.500" />
          <rect x="3" y="3" width="11.500" height="8" rx="1" fill="currentColor" />
          <path d="M18.500 5.500v3" strokeWidth="2" />
        </Svg>
        <div className="mb-[3px] ml-5 flex flex-col items-end">
          <Fit w={37}>18:53</Fit>
          <Fit w={78}>03-07-2025</Fit>
        </div>
      </div>
    </div>
  );
}

export default function App() {
  return (
    <div className="flex h-[1080px] w-[1920px] flex-col overflow-hidden bg-[#141f2e] font-['Open_Sans',sans-serif]">
      <TabStrip />
      <div className="h-[101px] rounded-t-[10px] border-b border-[#454d5b] bg-[#303a4b]">
        <AddressRow />
        <Bookmarks />
      </div>
      <div className="flex h-[869px] font-['Inter',sans-serif]">
        <LeftPanel />
        <Canvas />
        <RightPanel />
      </div>
      <Taskbar />
    </div>
  );
}
